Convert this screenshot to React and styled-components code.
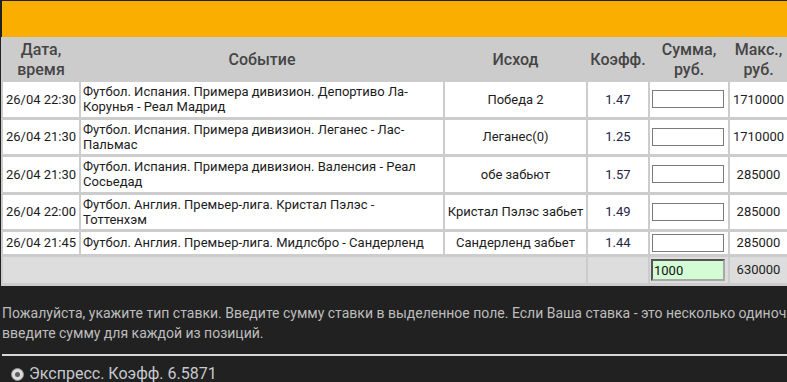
import React from 'react';
import styled, { createGlobalStyle } from 'styled-components';

const Global = createGlobalStyle`
  html, body { margin: 0; padding: 0; background: #212121; overflow: hidden; }
  body { font-family: Roboto, "Noto Sans", "Liberation Sans", sans-serif; }
`;

const Page = styled.div`
  width: 1000px;
  padding: 1px 0 0 2px;
`;

const TopBar = styled.div`
  height: 36px;
  background: #faae00;
`;

const Table = styled.table`
  margin-left: -1px;
  border-collapse: separate;
  border-spacing: 2px 3px;
  background: #cccccc;
  table-layout: fixed;
  width: 788px;
`;

const Col = styled.col`
  width: ${(p) => p.$w}px;
`;

const Th = styled.th`
  padding: 0;
  height: 39px;
  font-size: 16px;
  line-height: 19.5px;
  font-weight: 500;
  color: #454545;
  text-align: center;
  vertical-align: middle;
`;

const Td = styled.td`
  padding: 2px;
  background: ${(p) => (p.$foot ? '#dddddd' : '#ffffff')};
  font-size: 13px;
  line-height: 15.25px;
  color: ${(p) => p.$color || '#1c1c1c'};
  text-align: ${(p) => p.$align || 'center'};
  vertical-align: middle;
  white-space: ${(p) => (p.$nowrap ? 'nowrap' : 'normal')};
  overflow: hidden;
`;

const StakeInput = styled.input`
  display: block;
  box-sizing: border-box;
  width: ${(p) => (p.$total ? 74 : 72)}px;
  height: ${(p) => (p.$total ? 22 : 18)}px;
  margin: 0 0 0 ${(p) => (p.$total ? -1 : 0)}px;
  padding: 0 1px;
  font-family: Roboto, "Noto Sans", sans-serif;
  font-size: 13px;
  color: #111;
  background: ${(p) => (p.$total ? '#d4fcd4' : '#ffffff')};
  border: ${(p) => (p.$total ? '2px inset #a8a8a8' : '1px solid #7a7a7a')};
  border-radius: 0;
  outline: none;
`;

const Message = styled.p`
  margin: 17px 0 0 0;
  font-size: 14px;
  line-height: 20px;
  color: #bdbdbd;
  white-space: nowrap;
`;

const Rule = styled.div`
  margin-top: 11px;
  height: 2px;
  background: #d6d6d6;
`;

const RadioRow = styled.label`
  display: flex;
  align-items: center;
  gap: 5px;
  margin: 8px 0 0 9px;
  font-size: 16px;
  line-height: 20px;
  color: #c6c9cf;
`;

const Radio = styled.span`
  position: relative;
  box-sizing: border-box;
  width: 13px;
  height: 13px;
  border-radius: 50%;
  background: #dcdcdc;
  border: 1px solid #8f8f8f;
  flex: none;
  &::after {
    content: '';
    position: absolute;
    left: 3px;
    top: 3px;
    width: 5px;
    height: 5px;
    border-radius: 50%;
    background: #5e5e5e;
  }
`;

const bets = [
  { date: '26/04 22:30', event: 'Футбол. Испания. Примера дивизион. Депортиво Ла-Корунья - Реал Мадрид', outcome: 'Победа 2', k: '1.47', max: '1710000' },
  { date: '26/04 21:30', event: 'Футбол. Испания. Примера дивизион. Леганес - Лас-Пальмас', outcome: 'Леганес(0)', k: '1.25', max: '1710000' },
  { date: '26/04 21:30', event: 'Футбол. Испания. Примера дивизион. Валенсия - Реал Сосьедад', outcome: 'обе забьют', k: '1.57', max: '285000' },
  { date: '26/04 22:00', event: 'Футбол. Англия. Премьер-лига. Кристал Пэлэс - Тоттенхэм', outcome: 'Кристал Пэлэс забьет', k: '1.49', max: '285000' },
  { date: '26/04 21:45', event: 'Футбол. Англия. Премьер-лига. Мидлсбро - Сандерленд', outcome: 'Сандерленд забьет', k: '1.44', max: '285000' },
];

export default function App() {
  return (
    <>
      <Global />
      <Page>
        <TopBar />
        <Table>
          <colgroup>
            <Col $w={76} />
            <Col $w={362} />
            <Col $w={141} />
            <Col $w={60} />
            <Col $w={78} />
            <Col $w={57} />
          </colgroup>
          <thead>
            <tr>
              <Th>Дата,<br />время</Th>
              <Th>Событие</Th>
              <Th>Исход</Th>
              <Th>Коэфф.</Th>
              <Th>Сумма,<br />руб.</Th>
              <Th>Макс.,<br />руб.</Th>
            </tr>
          </thead>
          <tbody>
            {bets.map((b, i) => (
              <tr key={i}>
                <Td $nowrap>{b.date}</Td>
                <Td $align="left">{b.event}</Td>
                <Td $nowrap>{b.outcome}</Td>
                <Td $color="#232346">{b.k}</Td>
                <Td $align="left"><StakeInput type="text" defaultValue="" /></Td>
                <Td $nowrap>{b.max}</Td>
              </tr>
            ))}
            <tr>
              <Td $foot colSpan={3}></Td>
              <Td $foot></Td>
              <Td $foot $align="left"><StakeInput $total type="text" defaultValue="1000" /></Td>
              <Td $foot $nowrap>630000</Td>
            </tr>
          </tbody>
        </Table>
        <Message>
          Пожалуйста, укажите тип ставки. Введите сумму ставки в выделенное поле. Если Ваша ставка - это несколько одиночных ставок,
          <br />
          введите сумму для каждой из позиций.
        </Message>
        <Rule />
        <RadioRow>
          <Radio />
          Экспресс. Коэфф. 6.5871
        </RadioRow>
      </Page>
    </>
  );
}
